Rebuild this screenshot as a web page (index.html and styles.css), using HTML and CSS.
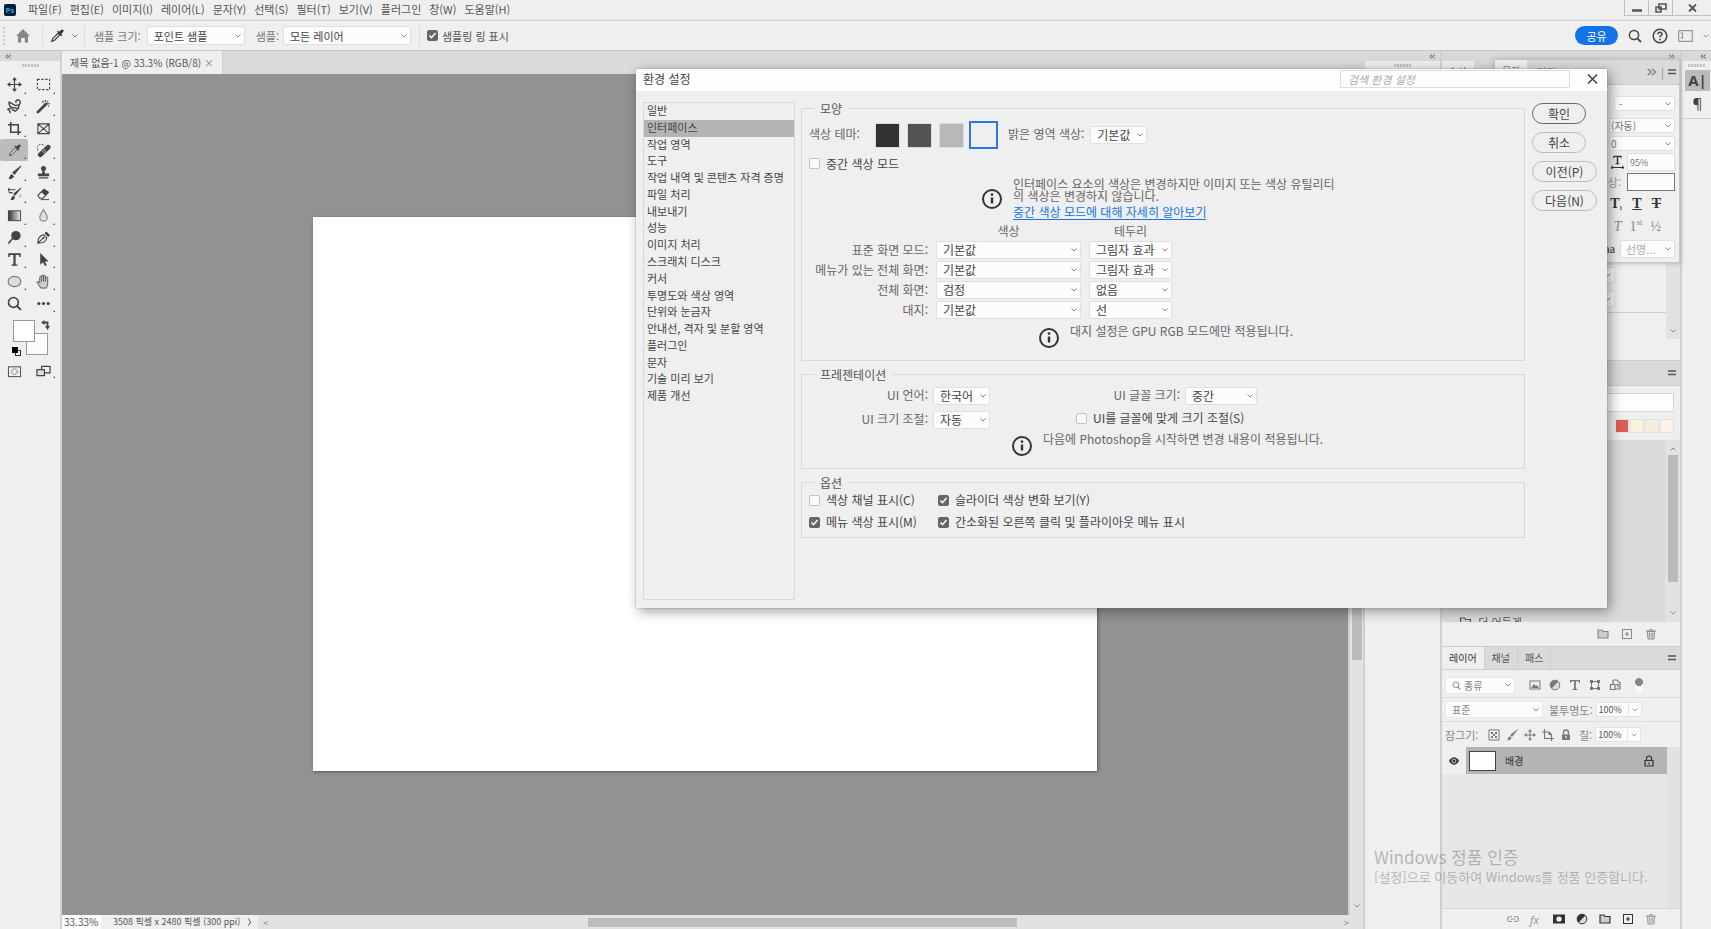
FILE: index.html
```html
<!DOCTYPE html>
<html lang="ko">
<head>
<meta charset="utf-8">
<title>Photoshop - 환경 설정</title>
<link rel="stylesheet" href="styles.css">
</head>
<body>
<svg class="defs" aria-hidden="true">
  <symbol id="info" viewBox="0 0 20 20"><circle cx="10" cy="10" r="9" fill="none" stroke="currentColor" stroke-width="2"/><path d="M10 8.5v6" stroke="currentColor" stroke-width="2.4"/><circle cx="10" cy="5.6" r="1.3" fill="currentColor"/></symbol>
  <symbol id="dropper" viewBox="0 0 18 18"><path d="M3 15l1-3 6-6 2 2-6 6z" fill="#ddd" stroke="currentColor" stroke-width="1.2"/><path d="M9 4l1.200-1 1.300 1.300L14 2c1.500-.8 3 .7 2.200 2.200l-2.400 2.400L15 8l-1.200 1.200z" fill="currentColor"/></symbol>
  <symbol id="menu" viewBox="0 0 8 8"><path d="M0 2h8M0 5.500h8" stroke="currentColor" stroke-width="1.500"/></symbol>
  <symbol id="move" viewBox="0 0 16 16"><path d="M8 2v12M2 8h12" stroke="currentColor" stroke-width="1.300"/><path d="M8 0l2.600 3.500H5.400zM8 16l2.600-3.500H5.400zM0 8l3.500-2.600v5.200zM16 8l-3.500-2.600v5.200z" fill="currentColor"/></symbol>
  <symbol id="brush" viewBox="0 0 16 16"><path d="M15 1L8 10 6 8z" fill="currentColor" stroke="currentColor"/><path d="M1 15c2 0 1-4 4-5.500L7.500 12C6 15 4 15 1 15z" fill="currentColor"/></symbol>
  <symbol id="folder" viewBox="0 0 12 12"><path d="M1 10V2h4l1 1.500h5V10z" fill="#ccc" stroke="currentColor" stroke-width="1.200"/></symbol>
  <symbol id="plus" viewBox="0 0 12 12"><rect x="1.500" y="1.500" width="9" height="9" fill="none" stroke="currentColor"/><path d="M6 4v4M4 6h4" stroke="currentColor" stroke-width="1.200"/></symbol>
  <symbol id="trash" viewBox="0 0 12 12"><path d="M2.500 3.500h7L9 11H3z" fill="#ddd" stroke="currentColor"/><path d="M1 3h10M4.500 1.500h3M4.800 5v4.500M7.200 5v4.500" stroke="currentColor" fill="none"/></symbol>
  <symbol id="lock" viewBox="0 0 12 12"><path d="M2 5.500h8V11H2z" fill="currentColor"/><path d="M3.500 5.500V3.500a2.500 2.500 0 015 0v2" fill="none" stroke="currentColor" stroke-width="1.300"/><circle cx="6" cy="8" r=".9" fill="#eee"/></symbol>
  <symbol id="glass" viewBox="0 0 14 14"><circle cx="6" cy="6" r="4.600" fill="none" stroke="currentColor" stroke-width="1.500"/><path d="M9.300 9.300L13 13" stroke="currentColor" stroke-width="1.800"/></symbol>
  <symbol id="half" viewBox="0 0 12 12"><circle cx="6" cy="6" r="4.800" fill="#ddd" stroke="currentColor"/><path d="M2.600 9.400A4.800 4.800 0 019.400 2.600z" fill="currentColor"/></symbol>
  <symbol id="tee" viewBox="0 0 12 12"><path d="M1 1h10v3h-1L9.500 2.300H6.900v7.500l1.600.4v.8h-5v-.8l1.600-.4V2.300H2.500L2 4H1z" fill="currentColor"/></symbol>
  <symbol id="collapse" viewBox="0 0 8 6"><path d="M4 .5L1.200 3 4 5.500M7.500.5L4.700 3l2.800 2.500" fill="none" stroke="currentColor" stroke-width="1.200"/></symbol>
  <symbol id="expand" viewBox="0 0 8 6"><path d="M.5.500L3.300 3 .5 5.500M4 .5L6.800 3 4 5.500" fill="none" stroke="currentColor" stroke-width="1.200"/></symbol>
</svg>

<header class="menubar">
  <svg class="logo" viewBox="0 0 12 12" aria-label="Ps"><rect width="12" height="12" rx="2" fill="#001e36"/><text x="6" y="8.500" text-anchor="middle" class="logo-text">Ps</text></svg>
  <nav>
    <a href="#">파일(F)</a><a href="#">편집(E)</a><a href="#">이미지(I)</a><a href="#">레이어(L)</a><a href="#">문자(Y)</a><a href="#">선택(S)</a><a href="#">필터(T)</a><a href="#">보기(V)</a><a href="#">플러그인</a><a href="#">창(W)</a><a href="#">도움말(H)</a>
  </nav>
  <div class="window-buttons">
    <button aria-label="최소화"><svg width="10" height="10" viewBox="0 0 10 10"><path d="M0 7.500h10" stroke="currentColor" stroke-width="2.500"/></svg></button>
    <button aria-label="복원"><svg width="12" height="10" viewBox="0 0 12 10"><path d="M4 1h7v5H4zM1 4h5v5H1z" fill="none" stroke="currentColor" stroke-width="1.600"/></svg></button>
    <button class="wide" aria-label="닫기"><svg width="9" height="8" viewBox="0 0 9 8"><path d="M1 .5l7 7M8 .5l-7 7" stroke="currentColor" stroke-width="1.900"/></svg></button>
  </div>
</header>

<section class="options">
  <span class="dots"></span>
  <svg class="home" viewBox="0 0 14 14"><path d="M7 0l7 7h-2v6.500H8.800V9H5.200v4.500H2V7H0z" fill="#868686"/></svg>
  <div class="dropper-box"><svg width="16" height="16"><use href="#dropper"/></svg><svg width="6" height="4" viewBox="0 0 6 4"><path d="M.5.500L3 3 5.500.500" fill="none" stroke="#777"/></svg></div>
  <label for="sample-size">샘플 크기:</label>
  <select id="sample-size" class="size-select"><option>포인트 샘플</option></select>
  <label for="sample">샘플:</label>
  <select id="sample" class="layer-select"><option>모든 레이어</option></select>
  <label class="ring"><input type="checkbox" checked>샘플링 링 표시</label>
  <div class="right-tools">
    <button class="share">공유</button>
    <svg width="14" height="14"><use href="#glass"/></svg>
    <svg width="16" height="16" viewBox="0 0 16 16"><circle cx="8" cy="8" r="6.800" fill="none" stroke="currentColor" stroke-width="1.500"/><path d="M5.900 6.300c.2-2.800 4.200-2.600 4.200-.2C10.100 7.600 8 7.500 8 9.300" fill="none" stroke="currentColor" stroke-width="1.500"/><circle cx="8" cy="11.500" r=".9" fill="currentColor"/></svg>
    <svg class="dim" width="15" height="12" viewBox="0 0 15 12"><path d="M.7.700h13.600v10.600H.7zM2.500 3h2v5h-2" fill="none" stroke="currentColor" stroke-width="1.200"/></svg>
    <svg class="dim" width="6" height="4" viewBox="0 0 6 4"><path d="M.5.500L3 3 5.500.500" fill="none" stroke="currentColor"/></svg>
  </div>
</section>

<main class="workspace">
  <aside class="toolbar">
    <div class="dock-head start"><svg width="6" height="5"><use href="#collapse"/></svg></div>
    <div class="grip"><i></i></div>
    <div class="tools">
      <button class="more" aria-label="이동"><svg><use href="#move"/></svg></button>
      <button class="more" aria-label="선택 윤곽"><svg viewBox="0 0 16 16"><rect x="1.500" y="2.500" width="13" height="11" fill="none" stroke="currentColor" stroke-width="1.200" stroke-dasharray="2.500 1.700"/></svg></button>
      <button class="more" aria-label="올가미"><svg viewBox="0 0 16 16"><path d="M2 3l7 4 4-1c2-2 1-5-1-5-3 0-3 2-2 3M2 3c0 3 1 5 3 6l-4 2c2 1 3 2 2 4M5 9l7 1-3 3-4-2M13 6l-1 4" fill="none" stroke="currentColor" stroke-width="1.500"/></svg></button>
      <button class="more" aria-label="마술봉"><svg viewBox="0 0 16 16"><path d="M2 14l9-9" stroke="currentColor" stroke-width="3" stroke-linecap="round"/><path d="M10 1v2M7 2l1 2M13 2l-1 1M15 5h-2M14 8l-1-1" stroke="currentColor" stroke-width="1.200"/></svg></button>
      <button class="more" aria-label="자르기"><svg viewBox="0 0 16 16"><path d="M4 1v11h11M1 4h11v11" fill="none" stroke="currentColor" stroke-width="1.700"/></svg></button>
      <button aria-label="프레임"><svg viewBox="0 0 16 16"><path d="M2 3h12v10.500H2zM2 3l12 10.500M14 3L2 13.500" fill="none" stroke="currentColor" stroke-width="1.200"/></svg></button>
      <button class="more selected" aria-label="스포이드"><svg><use href="#dropper"/></svg></button>
      <button class="more" aria-label="복구 브러시"><svg viewBox="0 0 16 16"><path d="M4.500 12.500L13 4.500" stroke="currentColor" stroke-width="5" stroke-linecap="round"/><path d="M2 8C-1 1 7 0 9 3" fill="none" stroke="currentColor" stroke-dasharray="2 1.200"/><path d="M6 8l4 3M8 6l3 4" stroke="#ddd" stroke-width=".8"/></svg></button>
      <button class="more" aria-label="브러시"><svg><use href="#brush"/></svg></button>
      <button class="more" aria-label="도장"><svg viewBox="0 0 16 16"><circle cx="8" cy="3.700" r="2.700" fill="currentColor"/><path d="M7 5h2l.5 4H14v3H2V9h4.500zM3 13h10v1.500H3z" fill="currentColor"/></svg></button>
      <button class="more" aria-label="작업 내역 브러시"><svg viewBox="0 0 16 16"><path d="M15 2L8.500 10 7 8.500z" fill="currentColor" stroke="currentColor"/><path d="M3 15c2 0 1-4 4-5l1.500 2C8 15 6 15 3 15z" fill="currentColor"/><path d="M1 4h8M2 7h4M2 2v4" stroke="currentColor" stroke-width="1.200"/><path d="M14 9v3" stroke="currentColor" stroke-dasharray="1 1"/></svg></button>
      <button class="more" aria-label="지우개"><svg viewBox="0 0 16 16"><path d="M2 10l6-6 5 3-5.500 6H4z" fill="#eee" stroke="currentColor" stroke-width="1.200"/><path d="M5.500 6.500L9 3l5 3.500-4 4z" fill="currentColor"/><path d="M5 14.500h9" stroke="currentColor"/></svg></button>
      <button class="more" aria-label="그레이디언트"><svg viewBox="0 0 16 16"><defs><linearGradient id="g"><stop stop-color="#333"/><stop offset="1" stop-color="#eee"/></linearGradient></defs><rect x="1.500" y="3" width="13" height="10.500" fill="url(#g)" stroke="currentColor"/></svg></button>
      <button class="more" aria-label="흐림"><svg viewBox="0 0 16 16"><path d="M8 1.500c2 4 4 5.500 4 8.500a4 4 0 01-8 0c0-3 2-4.500 4-8.500z" fill="#ddd" stroke="#888" stroke-width="1.200"/></svg></button>
      <button class="more" aria-label="닷지"><svg viewBox="0 0 16 16"><circle cx="9.500" cy="6" r="5" fill="currentColor"/><path d="M6 9l-4.500 5.500" stroke="currentColor" stroke-width="1.700"/></svg></button>
      <button class="more" aria-label="펜"><svg viewBox="0 0 16 16"><path d="M2 14c0-5 1-8 6-9l3.500 3.500C11 12 7 14 2 14zM2 14l5.500-5" fill="#eee" stroke="currentColor" stroke-width="1.200"/><circle cx="8" cy="8.500" r="1.200" fill="currentColor"/><path d="M9 3.500l2-2 4 4-2 2z" fill="currentColor"/></svg></button>
      <button class="more" aria-label="문자"><svg viewBox="0 0 12 12"><use href="#tee" width="12" height="12"/></svg></button>
      <button class="more" aria-label="경로 선택"><svg viewBox="0 0 16 16"><path d="M4.500 1v12.500l3-2.700 2 4.200 2-1-2-4h4z" fill="currentColor"/></svg></button>
      <button class="more" aria-label="타원"><svg viewBox="0 0 16 16"><ellipse cx="8" cy="8" rx="6.800" ry="5.500" fill="#ddd" stroke="#777" stroke-width="1.200"/></svg></button>
      <button class="more" aria-label="손"><svg viewBox="0 0 16 16"><path d="M5 15L1 8.500c1-1.200 2-.5 3 1V3.500c0-1.300 2-1.300 2 0V2c0-1.300 2-1.300 2 0v.5c0-1.300 2-1.300 2 0V4c0-1.300 2.500-1.300 2.500 0v6c0 3-1 4-1.500 5z" fill="#ccc" stroke="#555"/><path d="M6 3.500V8M8 2v6M10 3v5" stroke="#555"/></svg></button>
      <button aria-label="돋보기"><svg viewBox="0 0 14 14"><use href="#glass" width="14" height="14"/></svg></button>
      <button class="more" aria-label="도구 모음 편집"><svg viewBox="0 0 16 16"><circle cx="3" cy="8" r="1.700" fill="currentColor"/><circle cx="8" cy="8" r="1.700" fill="currentColor"/><circle cx="13" cy="8" r="1.700" fill="currentColor"/></svg></button>
    </div>
    <div class="colors"><i class="bg-color"></i><i class="fg-color"></i>
      <svg class="swap" viewBox="0 0 10 10"><path d="M3 2.500h3.500v4" fill="none" stroke="currentColor" stroke-width="1.800"/><path d="M0 2.500L3.500 0v5zM6.500 10L4 6h5z" fill="currentColor"/></svg>
      <svg class="default" viewBox="0 0 9 9"><rect x="3.500" y="3.500" width="5" height="5" fill="#fff" stroke="#333"/><rect width="6" height="6" fill="#000"/></svg>
    </div>
    <div class="modes">
      <button aria-label="빠른 마스크"><svg viewBox="0 0 16 16"><rect x="1.500" y="3" width="13" height="10.500" fill="none" stroke="currentColor"/><circle cx="8" cy="8.200" r="3" fill="#eee" stroke="currentColor" stroke-dasharray="1.500 1"/></svg></button>
      <button class="more" aria-label="화면 모드"><svg viewBox="0 0 16 16"><path d="M6 2.500h9v7H6z" fill="none" stroke="currentColor" stroke-width="1.300"/><path d="M1 6h8v6.500H1z" fill="#ddd" stroke="currentColor" stroke-width="1.300"/></svg></button>
    </div>
  </aside>

  <section class="document">
    <div class="tab-strip"><div class="doc-tab">제목 없음-1 @ 33.3% (RGB/8)<button aria-label="닫기">×</button></div></div>
    <div class="canvas-row">
      <div class="canvas"><div class="paper"></div></div>
      <div class="vscroll"><i></i><svg width="6" height="4" viewBox="0 0 6 4"><path d="M.5.500L3 3 5.500.500" fill="none" stroke="currentColor"/></svg></div>
    </div>
    <div class="status"><span class="zoom">33.33%</span><span class="size">3508 픽셀 x 2480 픽셀 (300 ppi)</span><span class="angle"><svg width="4" height="8" viewBox="0 0 4 8"><path d="M.5.500l2 3.500-2 3.500" fill="none" stroke="currentColor"/></svg></span><div class="hscroll"><span>&lt;</span><i></i><span>&gt;</span></div></div>
  </section>

  <aside class="narrow-dock">
    <div class="dock-head end"><svg width="6" height="5"><use href="#collapse"/></svg></div>
    <div class="grip"><i></i></div>
  </aside>

  <aside class="panels">
    <div class="dock-head end"><svg width="6" height="5"><use href="#expand"/></svg></div>
    <div class="properties">
      <div class="prop-tabs"><span>속성</span></div>
      <div class="prop-content">
        <div class="prop-main"><select aria-label="모드"><option></option></select><select aria-label="칠"><option></option></select></div>
        <div class="side-scroll"><svg width="6" height="4" viewBox="0 0 6 4"><path d="M.5.500L3 3 5.500.500" fill="none" stroke="currentColor"/></svg></div>
      </div>
    </div>
    <div class="panel-tabs plain"><svg class="menu-icon"><use href="#menu"/></svg></div>
    <div class="swatches">
      <input type="text" aria-label="색상 견본 검색">
      <div class="chips"><i class="red"></i><i class="cream"></i><i class="sand"></i><i class="peach"></i></div>
    </div>
    <div class="tree"><div class="tree-main"><div class="tree-row"><span>›</span><svg width="13" height="12"><use href="#folder"/></svg><span>더 어둡게</span></div></div>
      <div class="tree-scroll"><svg width="6" height="4" viewBox="0 0 6 4"><path d="M.5 3.500L3 1l2.500 2.500" fill="none" stroke="currentColor"/></svg><i></i><svg width="6" height="4" viewBox="0 0 6 4"><path d="M.5.500L3 3 5.500.500" fill="none" stroke="currentColor"/></svg></div>
    </div>
    <div class="panel-foot dimmed"><svg><use href="#folder"/></svg><svg><use href="#plus"/></svg><svg><use href="#trash"/></svg></div>
    <div class="panel-tabs"><button class="active">레이어</button><button>채널</button><button>패스</button><svg class="menu-icon"><use href="#menu"/></svg></div>
    <div class="layer-row filter-row">
      <div class="kind"><svg width="9" height="9"><use href="#glass"/></svg><select aria-label="종류"><option>종류</option></select></div>
      <div class="filters">
        <svg viewBox="0 0 12 12"><rect x="1" y="2" width="10" height="8" fill="none" stroke="currentColor"/><path d="M2 9l3-4 2 2 1-1 2 3z" fill="currentColor"/></svg>
        <svg><use href="#half"/></svg><svg><use href="#tee"/></svg>
        <svg viewBox="0 0 12 12"><path d="M2.500 2.500h7v7h-7z" fill="none" stroke="currentColor"/><path d="M1 1h3v3H1zM8 1h3v3H8zM1 8h3v3H1zM8 8h3v3H8z" fill="currentColor"/></svg>
        <svg viewBox="0 0 12 12"><path d="M4 1h4l3 3v6H6M4 1v4M1.500 5.500h4.500v5H1.500zM7 5.500h2v3" fill="none" stroke="currentColor" stroke-width="1.200"/></svg>
      </div><i class="toggle"></i>
    </div>
    <div class="layer-row blend-row">
      <select class="blend" aria-label="혼합 모드"><option>표준</option></select>
      <label for="opacity">불투명도:</label><span class="combo"><input id="opacity" value="100%"><button aria-label="불투명도 열기"></button></span>
    </div>
    <div class="layer-row lock-row"><span class="lock-label">잠그기:</span>
      <div class="locks">
        <svg viewBox="0 0 12 12"><path d="M1 1h10v10H1z" fill="none" stroke="currentColor"/><path d="M3 3h2v2H3zM7 3h2v2H7zM5 5h2v2H5zM3 7h2v2H3zM7 7h2v2H7z" fill="currentColor"/></svg>
        <svg><use href="#brush"/></svg><svg><use href="#move"/></svg>
        <svg viewBox="0 0 12 12"><path d="M0 3h7l2.500 2.500V12M2.500 0v9.500H12M7 3v2.500h2.500" fill="none" stroke="currentColor" stroke-width="1.200"/></svg>
        <svg><use href="#lock"/></svg>
      </div>
      <label for="fill">칠:</label><span class="combo"><input id="fill" value="100%"><button aria-label="칠 열기"></button></span>
    </div>
    <div class="layers">
      <div class="layer-list">
        <div class="layer"><span class="eye"><svg width="10" height="8" viewBox="0 0 10 8"><path d="M0 4c3-5 7-5 10 0-3 5-7 5-10 0z" fill="currentColor"/><circle cx="5" cy="4" r="1.900" fill="none" stroke="#eee" stroke-width=".8"/></svg></span>
          <div class="layer-name"><i class="thumb"></i><span>배경</span><svg width="12" height="12" viewBox="0 0 12 12"><path d="M2 5.500h8V11H2zM3.500 5.500V3.500a2.500 2.500 0 015 0v2M6 7.500v2" fill="none" stroke="currentColor" stroke-width="1.200"/></svg></div></div>
      </div><div class="layer-scroll"></div>
    </div>
    <div class="panel-foot">
      <svg class="faded" viewBox="0 0 12 12"><path d="M5 3.500H3a2.500 2.500 0 000 5h2M7 3.500h2a2.500 2.500 0 010 5H7M3.500 6h5" fill="none" stroke="currentColor" stroke-width="1.200"/></svg>
      <span class="fx faded">fx</span>
      <svg viewBox="0 0 12 12"><path d="M0 1.500h12v9H0z" fill="currentColor"/><circle cx="6" cy="6" r="2.600" fill="#fff"/></svg>
      <svg><use href="#half"/></svg><svg><use href="#folder"/></svg><svg><use href="#plus"/></svg><svg class="faded"><use href="#trash"/></svg>
    </div>

    <div class="character">
      <div class="char-head"><span class="char-tab">문자</span><span class="char-tab-2">단락</span><svg class="push" width="10" height="8" ><use href="#expand"/></svg><span>|</span><svg class="menu-icon"><use href="#menu"/></svg></div>
      <div class="char-body">
        <select class="style" aria-label="글꼴 스타일"><option>-</option></select>
        <select class="leading" aria-label="행간"><option>(자동)</option></select>
        <select class="tracking" aria-label="자간"><option>0</option></select>
        <div class="line"><svg width="15" height="14" viewBox="0 0 15 14"><use href="#tee" x="2" width="11" height="10"/><path d="M1 12.500h13M3 11l-2 1.500L3 14M12 11l2 1.500-2 1.500" fill="none" stroke="currentColor"/></svg><input class="scale" value="95%" aria-label="가로 비율"></div>
        <div class="line"><span class="color-label">색상:</span><button class="text-color" aria-label="텍스트 색상"></button></div>
        <div class="line type-icons"><span>T<small>₁</small></span><u>T</u><s>T</s></div>
        <div class="line type-icons light"><em>T</em><span>1<sup>st</sup></span><span>½</span></div>
        <div class="line"><label for="anti" class="aa">aa</label><select id="anti" class="anti"><option>선명...</option></select></div>
      </div>
    </div>
  </aside>

  <aside class="strip">
    <div class="dock-head end"><svg width="6" height="5"><use href="#collapse"/></svg></div>
    <div class="grip"><i></i></div>
    <button class="on">A|</button><button>¶</button>
  </aside>
</main>

<section class="dialog" role="dialog" aria-label="환경 설정">
  <header class="dialog-title"><h1>환경 설정</h1><input type="search" placeholder="검색 환경 설정" aria-label="검색 환경 설정"><button aria-label="닫기"><svg width="11" height="10" viewBox="0 0 11 10"><path d="M1 .5l9 9M10 .5l-9 9" stroke="currentColor" stroke-width="1.500"/></svg></button></header>
  <div class="dialog-body">
    <nav class="categories"><ul>
      <li>일반</li><li class="current">인터페이스</li><li>작업 영역</li><li>도구</li><li>작업 내역 및 콘텐츠 자격 증명</li><li>파일 처리</li><li>내보내기</li><li>성능</li><li>이미지 처리</li><li>스크래치 디스크</li><li>커서</li><li>투명도와 색상 영역</li><li>단위와 눈금자</li><li>안내선, 격자 및 분할 영역</li><li>플러그인</li><li>문자</li><li>기술 미리 보기</li><li>제품 개선</li>
    </ul></nav>
    <div class="settings">
      <fieldset class="look"><legend>모양</legend>
        <div class="theme-row"><span class="theme-label">색상 테마:</span>
          <div class="themes"><button class="t1" aria-label="가장 어둡게"></button><button class="t2" aria-label="어둡게"></button><button class="t3" aria-label="밝게"></button><button class="t4" aria-label="가장 밝게"></button></div>
          <label for="highlight">밝은 영역 색상:</label><select id="highlight"><option>기본값</option></select></div>
        <label class="check neutral"><input type="checkbox">중간 색상 모드</label>
        <div class="note note-1"><svg><use href="#info"/></svg><div>인터페이스 요소의 색상은 변경하지만 이미지 또는 색상 유틸리티<br>의 색상은 변경하지 않습니다.<a href="#">중간 색상 모드에 대해 자세히 알아보기</a></div></div>
        <div class="screen-grid">
          <span></span><span class="head">색상</span><span class="head">테두리</span>
          <label for="s1">표준 화면 모드:</label><select id="s1"><option>기본값</option></select><select aria-label="표준 테두리"><option>그림자 효과</option></select>
          <label for="s2">메뉴가 있는 전체 화면:</label><select id="s2"><option>기본값</option></select><select aria-label="메뉴 테두리"><option>그림자 효과</option></select>
          <label for="s3">전체 화면:</label><select id="s3"><option>검정</option></select><select aria-label="전체 테두리"><option>없음</option></select>
          <label for="s4">대지:</label><select id="s4"><option>기본값</option></select><select aria-label="대지 테두리"><option>선</option></select>
        </div>
        <div class="note note-2"><svg><use href="#info"/></svg><div>대지 설정은 GPU RGB 모드에만 적용됩니다.</div></div>
      </fieldset>
      <fieldset class="presentation"><legend>프레젠테이션</legend>
        <div class="ui-grid">
          <label for="lang">UI 언어:</label><select id="lang"><option>한국어</option></select>
          <label for="font">UI 글꼴 크기:</label><select id="font"><option>중간</option></select>
          <label for="scale">UI 크기 조절:</label><select id="scale"><option>자동</option></select>
          <label class="check fit"><input type="checkbox">UI를 글꼴에 맞게 크기 조절(S)</label>
        </div>
        <div class="note note-3"><svg><use href="#info"/></svg><div>다음에 Photoshop을 시작하면 변경 내용이 적용됩니다.</div></div>
      </fieldset>
      <fieldset class="choices"><legend>옵션</legend>
        <div class="choice-grid">
          <label class="check"><input type="checkbox">색상 채널 표시(C)</label><label class="check"><input type="checkbox" checked>슬라이더 색상 변화 보기(Y)</label>
          <label class="check"><input type="checkbox" checked>메뉴 색상 표시(M)</label><label class="check"><input type="checkbox" checked>간소화된 오른쪽 클릭 및 플라이아웃 메뉴 표시</label>
        </div>
      </fieldset>
    </div>
    <div class="actions"><button class="primary">확인</button><button>취소</button><button class="long">이전(P)</button><button class="long">다음(N)</button></div>
  </div>
</section>

<div class="watermark"><p class="big">Windows 정품 인증</p><p>[설정]으로 이동하여 Windows를 정품 인증합니다.</p></div>
</body>
</html>
```
FILE: styles.css
```css
* { box-sizing: border-box; }
body {
  margin: 0;
  height: 100vh;
  display: flex;
  flex-direction: column;
  overflow: hidden;
  position: relative;
  background: #efefef;
  color: #555;
  font: 11px/14px "Noto Sans CJK KR", sans-serif;
}
button, input, select { font: inherit; color: inherit; margin: 0; padding: 0; border: 0; background: none; border-radius: 0; }
a { color: inherit; text-decoration: none; }
i { display: block; font-style: normal; }
svg { flex: none; display: block; }
.defs { position: absolute; width: 0; height: 0; }
select {
  appearance: none;
  height: 18px;
  padding: 0 16px 0 6px;
  line-height: 16px;
  color: #444;
  border: 1px solid #e0e0e0;
  border-radius: 2px;
  background: #fcfcfc url("data:image/svg+xml,%3Csvg xmlns='http://www.w3.org/2000/svg' width='6' height='4'%3E%3Cpath d='M.5.5L3 3 5.500.5' fill='none' stroke='%23888'/%3E%3C/svg%3E") no-repeat right 3px center;
}
input[type="checkbox"] { appearance: none; flex: none; width: 11px; height: 11px; border: 1px solid #c4c4c4; border-radius: 2px; background: #fafafa; }
input[type="checkbox"]:checked {
  border-color: #666;
  background: #666 url("data:image/svg+xml,%3Csvg xmlns='http://www.w3.org/2000/svg' width='9' height='9'%3E%3Cpath d='M1.500 4.500l2 2.200 4-4.700' fill='none' stroke='white' stroke-width='1.500'/%3E%3C/svg%3E") no-repeat center;
}

/* Menu and options bars */
.menubar { flex: none; display: flex; align-items: flex-start; height: 21px; border-bottom: 1px solid #cfcfcf; }
.logo { width: 12px; height: 12px; margin: 4px 12px 0 4px; }
.logo-text { font: bold 7px "Liberation Sans", sans-serif; fill: #31a8ff; }
.menubar nav { display: flex; gap: 8px; padding-top: 2px; }
.window-buttons { display: flex; margin-left: auto; color: #555; border: 1px solid #c0c0c0; border-top: 0; border-right: 0; }
.window-buttons button { width: 24px; height: 15px; display: grid; place-items: center; border-right: 1px solid #c0c0c0; }
.window-buttons .wide { width: 38px; border-right: 0; }
.options { flex: none; display: flex; align-items: center; height: 29px; padding: 0 2px 0 3px; color: #777; }
.dots { width: 2px; height: 18px; border-left: 2px dotted #ccc; }
.home { width: 14px; height: 14px; margin: 0 12px 0 11px; }
.dropper-box { display: flex; align-items: center; gap: 7px; height: 22px; padding: 0 6px; margin-right: 9px; border: 1px solid #dedede; border-width: 0 1px; color: #333; }
.options select { height: 19px; margin: 0 11px 0 6px; }
.options .size-select { width: 98px; }
.options .layer-select { width: 128px; margin-left: 4px; margin-right: 8px; }
.ring { display: flex; align-items: center; gap: 4px; padding-left: 7px; height: 22px; border-left: 1px solid #dedede; color: #555; }
.right-tools { display: flex; align-items: center; gap: 10px; margin-left: auto; color: #444; }
.right-tools .share { width: 43px; height: 19px; border-radius: 10px; background: #1473e6; color: #fff; }
.dim { color: #999; }

/* Docks */
.workspace { flex: 1; min-height: 0; display: flex; }
.dock-head { flex: none; height: 11px; display: flex; align-items: center; padding: 0 5px; background: #d9d9d9; border-top: 1px solid #c8c8c8; color: #444; }
.dock-head.end { justify-content: flex-end; }
.grip { flex: none; height: 13px; padding-top: 3px; }
.grip i { width: 17px; height: 3px; margin: 0 auto; background: repeating-linear-gradient(90deg, #c4c4c4 0 2px, #e4e4e4 2px 3px); }
.toolbar { flex: none; width: 62px; border-right: 2px solid #d2d2d2; color: #444; }
.tools { display: grid; grid-template: repeat(11, 1fr) / 28px 28px; column-gap: 1px; height: 240px; }
.tools button, .modes button { position: relative; display: grid; place-items: center; }
.tools svg, .modes svg { width: 15px; height: 15px; }
.tools .selected { background: #bbb; border-radius: 2px; }
.more::after { content: ""; position: absolute; right: 2px; bottom: 2px; border: 1px solid #555; border-top-color: transparent; border-left-color: transparent; }
.colors { position: relative; height: 48px; }
.fg-color, .bg-color { position: absolute; width: 22px; height: 22px; background: #fff; border: 1px solid #999; }
.fg-color { left: 13px; top: 6px; }
.bg-color { left: 26px; top: 19px; background: #fafcfb; }
.swap { position: absolute; left: 41px; top: 6px; width: 10px; height: 10px; }
.default { position: absolute; left: 12px; top: 33px; width: 9px; height: 9px; }
.modes { display: grid; grid-template-columns: 28px 28px; column-gap: 1px; height: 18px; }
.document { flex: 1; min-width: 0; display: flex; flex-direction: column; }
.tab-strip { flex: none; height: 24px; display: flex; background: #dadada; border-top: 1px solid #c8c8c8; }
.doc-tab { display: flex; align-items: center; padding: 0 8px; background: #efefef; font-size: 10px; border-right: 1px solid #cfcfcf; width: 161px; justify-content: space-between; white-space: nowrap; }
.doc-tab button { color: #888; }
.canvas-row { flex: 1; min-height: 0; display: flex; }
.canvas { flex: 1; background: #929292; padding: 143px 0 0 251px; overflow: hidden; }
.paper { width: 784px; height: 554px; background: #fff; box-shadow: 1px 1px 3px #555; }
.vscroll { width: 17px; display: flex; flex-direction: column; align-items: center; justify-content: space-between; padding-bottom: 7px; background: #e2e2e2; border: 1px solid #d0d0d0; border-width: 0 2px; color: #888; }
.vscroll i { width: 10px; height: 586px; background: #bcbcbc; }
.status { flex: none; display: flex; height: 14px; font-size: 9px; line-height: 13px; border-right: 2px solid #d0d0d0; }
.status .zoom { width: 39px; padding-left: 2px; background: #fcfcfc; font-size: 10px; }
.status .size { width: 147px; padding-left: 12px; white-space: nowrap; }
.status .angle { display: flex; align-items: center; width: 10px; }
.hscroll { flex: 1; display: flex; align-items: center; padding: 0 14px 0 5px; background: #e2e2e2; color: #888; }
.hscroll i { width: 429px; height: 9px; margin: 0 auto 0 320px; background: #bdbdbd; }
.narrow-dock { flex: none; width: 75px; }
.panels { position: relative; flex: none; width: 242px; display: flex; flex-direction: column; border: 2px solid #d0d0d0; border-width: 0 2px; }
.properties { flex: none; height: 299px; display: flex; flex-direction: column; }
.prop-tabs { height: 24px; background: #dadada; }
.prop-tabs span { display: block; width: 32px; height: 24px; padding: 4px 6px; font-size: 10px; background: #efefef; }
.prop-content { flex: 1; display: flex; padding-bottom: 21px; }
.prop-main { flex: 1; height: 228px; padding: 182px 51px 0 40px; border-bottom: 1px solid #d0d0d0; }
.prop-main select { display: block; width: 100%; height: 16px; margin-bottom: 8px; }
.side-scroll { width: 14px; background: #e2e2e2; display: flex; align-items: flex-end; justify-content: center; padding-bottom: 6px; color: #888; }
.panel-tabs { flex: none; height: 24px; display: flex; align-items: stretch; background: #dadada; border: 1px solid #ccc; border-width: 1px 0; font-size: 10px; padding-right: 4px; }
.panel-tabs.plain { height: 26px; }
.panel-tabs button { padding: 0 7px; border-right: 1px solid #cfcfcf; }
.panel-tabs .active { background: #efefef; color: #333; }
.menu-icon { width: 8px; height: 8px; margin-left: auto; align-self: center; color: #555; }
.swatches { flex: none; height: 54px; padding: 7px 6px 0; }
.swatches input { display: block; width: 100%; height: 19px; background: #fdfdfd; border: 1px solid #d4d4d4; }
.chips { display: flex; justify-content: flex-end; gap: 1px; margin-top: 7px; }
.chips i { width: 14px; height: 14px; border: 1px solid #e0e0e0; }
.chips .red { background: #d95f54; }
.chips .cream { background: #faf3d8; }
.chips .sand { background: #f6ecdf; }
.chips .peach { background: #fdf2e8; }
.tree { flex: none; height: 182px; display: flex; background: #dadada; }
.tree-main { flex: 1; display: flex; align-items: flex-end; overflow: hidden; }
.tree-row { display: flex; align-items: flex-start; gap: 6px; height: 6px; margin-left: 8px; overflow: hidden; line-height: 12px; }
.tree-scroll { width: 15px; display: flex; flex-direction: column; align-items: center; padding: 7px 0; background: #e2e2e2; color: #888; }
.tree-scroll i { width: 10px; height: 127px; margin: 4px 0 auto; background: #bababa; }
.panel-foot { flex: none; display: flex; align-items: center; justify-content: flex-end; gap: 11px; height: 21px; padding-right: 23px; color: #333; }
.panel-foot svg { width: 12px; height: 12px; }
.panel-foot.dimmed { gap: 12px; height: 24px; color: #888; }
.faded { color: #999; }
.fx { font: italic 11px "Noto Sans", sans-serif; width: 12px; }
.layer-row { flex: none; display: flex; align-items: center; height: 24px; padding: 0 4px 0 3px; border-bottom: 1px solid #ddd; color: #888; }
.layer-row select { height: 17px; color: #888; border-color: #e8e8e8; font-size: 10px; }
.layer-row.filter-row { height: 28px; padding-top: 3px; }
.kind { position: relative; width: 70px; }
.kind svg { position: absolute; left: 7px; top: 4px; }
.kind select { width: 100%; padding-left: 18px; }
.filters, .locks { display: flex; gap: 8px; }
.filters { margin-left: 14px; }
.filters svg, .locks svg { width: 12px; height: 12px; color: #777; }
.toggle { width: 8px; height: 15px; margin-left: 14px; border-radius: 4px; background: radial-gradient(circle at 4px 4px, #888 0 4px, #f8f8f8 4px); }
.blend { width: 98px; margin-right: 6px; }
.combo { display: flex; width: 46px; height: 15px; margin-left: 3px; background: #fcfcfc; border: 1px solid #e3e3e3; }
.combo input { width: 32px; padding-left: 2px; font-size: 9px; color: #555; border-right: 1px solid #e3e3e3; }
.combo button { flex: 1; background: url("data:image/svg+xml,%3Csvg xmlns='http://www.w3.org/2000/svg' width='6' height='4'%3E%3Cpath d='M.5.5L3 3 5.500.5' fill='none' stroke='%23aaa'/%3E%3C/svg%3E") no-repeat center; }
.lock-label { width: 43px; }
.locks { gap: 6px; width: 91px; }
.layer-row.lock-row { height: 25px; border: 0; }
.layers { flex: 1; min-height: 0; display: flex; background: #e7e7e7; }
.layer-list { flex: 1; }
.layer-scroll { width: 13px; background: #e2e2e2; }
.layer { display: flex; height: 27px; color: #333; }
.eye { width: 24px; background: #efefef; display: grid; place-items: center; }
.layer-name { flex: 1; display: flex; align-items: center; padding: 0 12px 0 3px; background: #b4b4b4; font-size: 10px; }
.layer-name svg { margin-left: auto; }
.thumb { width: 27px; height: 20px; margin-right: 9px; background: #fff; border: 1px solid #444; }
.layers + .panel-foot { border-top: 1px solid #d4d4d4; }

/* Floating character panel */
.character { position: absolute; top: 9px; right: 0; width: 186px; height: 204px; background: #efefef; border: 1px solid #c8c8c8; box-shadow: 0 0 5px #aaa; }
.char-head { display: flex; align-items: center; gap: 4px; height: 25px; padding-right: 3px; background: #dadada; border-bottom: 1px solid #ccc; color: #888; }
.char-head .menu-icon { margin-left: 0; }
.char-head .push { margin-left: auto; }
.char-tab { height: 24px; padding: 4px 7px; font-size: 10px; background: #efefef; }
.char-tab-2 { padding: 0 6px; font-size: 10px; }
.char-body { display: flex; flex-direction: column; align-items: flex-end; padding: 11px 4px 0 0; }
.char-body select { height: 15px; line-height: 13px; font-size: 10px; padding-left: 4px; color: #777; }
.char-body .style { width: 61px; margin-bottom: 7px; }
.char-body .leading { width: 66px; margin-bottom: 3px; padding-left: 1px; }
.char-body .tracking { width: 66px; margin-bottom: 2px; padding-left: 1px; }
.line { display: flex; align-items: center; justify-content: flex-end; gap: 2px; min-height: 18px; margin-bottom: 2px; color: #333; }
.scale, .text-color { width: 48px; height: 18px; background: #fcfcfc; border: 1px solid #ddd; }
.scale { font-size: 9px; padding-left: 2px; color: #777; }
.text-color { border-color: #777; }
.color-label { color: #999; padding-right: 4px; }
.type-icons { gap: 10px; height: 22px; margin-bottom: 0; padding-right: 14px; font: bold 14px/22px "Liberation Serif", serif; }
.type-icons.light { font-weight: normal; color: #888; gap: 8px; height: 24px; margin-bottom: 1px; }
.type-icons small, .type-icons sup { font-size: 9px; line-height: 9px; }
.aa { font: 12px "Liberation Serif", serif; padding-right: 3px; }
.char-body .anti { width: 55px; height: 18px; font-size: 11px; padding-left: 5px; color: #aaa; }
.strip { flex: none; width: 29px; background: linear-gradient(#cfcfcf, #cfcfcf) 0 68px / 100% 1px no-repeat; }
.strip button { display: block; width: 25px; height: 21px; margin: 0 0 2px 3px; font: 15px/17px "Noto Sans", sans-serif; color: #444; }
.strip .grip { height: 9px; }
.strip .on { background: #bbb; font-weight: bold; }
.strip button:last-child { margin-bottom: 0; }

/* Preferences dialog */
.dialog { position: absolute; left: 636px; top: 69px; width: 971px; height: 539px; display: flex; flex-direction: column; background: #efefef; box-shadow: 0 0 1px #777, 3px 3px 12px rgba(0, 0, 0, .4); font-size: 12px; color: #666; }
.dialog-title { flex: none; display: flex; align-items: center; height: 22px; padding: 0 9px 2px 7px; background: #fdfdfd; color: #444; }
.dialog-title h1 { flex: 1; margin: 0; font-size: 12px; line-height: 14px; font-weight: normal; }
.dialog-title input { width: 230px; height: 18px; padding: 0 7px; border: 1px solid #ddd; font-size: 11px; }
.dialog-title input::placeholder { font-style: italic; color: #aaa; }
.dialog-title button { margin-left: 17px; }
.dialog-body { flex: 1; display: flex; padding: 11px 9px 8px 7px; }
.categories { flex: none; width: 152px; border: 1px solid #d8d8d8; font-size: 11px; color: #444; }
.categories ul { display: grid; grid-auto-rows: 1fr; height: 302px; margin: 0; padding: 0; list-style: none; }
.categories li { padding-left: 3px; line-height: 15px; }
.categories .current { background: #b4b4b4; }
.settings { flex: 1; display: flex; flex-direction: column; gap: 7px; margin: 0 7px 0 6px; }
fieldset { min-width: 0; margin: 0; padding: 0 7px; border: 1px solid #d8d8d8; }
legend { margin-left: 5px; padding: 0 6px; line-height: 13px; color: #555; }
.look { height: 259px; padding-top: 6px; }
.presentation { height: 101px; padding-top: 6px; }
.theme-row { display: flex; align-items: center; height: 28px; }
.theme-label { width: 66px; padding-bottom: 2px; }
.theme-row label { padding-bottom: 2px; }
.themes { display: flex; align-items: center; gap: 7px; margin-right: 10px; }
.themes button { width: 25px; height: 25px; border: 1px solid #ddd; }
.themes .t1 { background: #323232; }
.themes .t2 { background: #535353; }
.themes .t3 { background: #b8b8b8; }
.themes .t4 { width: 29px; height: 28px; margin-left: -2px; background: #f0f0f0; border: 2px solid #2678e8; }
.theme-row select { width: 57px; margin-left: 6px; }
.check { display: flex; align-items: center; gap: 6px; color: #444; }
.neutral { height: 15px; margin-top: 7px; }
.note { display: flex; gap: 11px; line-height: 12px; }
.note svg { width: 20px; height: 20px; color: #333; }
.note a { display: block; width: max-content; margin-top: 3px; line-height: 14px; color: #1473e6; border-bottom: 1px solid #1473e6; }
.note-1 { margin-top: 7px; padding-left: 173px; align-items: center; }
.note-2 { margin-top: 6px; padding-left: 230px; }
.note-3 { margin-top: 4px; padding-left: 203px; }
.note-2 svg, .note-3 svg { margin-top: 3px; }
.screen-grid { display: grid; grid-template-columns: 119px 145px 83px; gap: 2px 8px; padding-top: 3px; }
.screen-grid label, .ui-grid label:not(.check) { text-align: right; line-height: 18px; }
.ui-grid label:not(.check) { line-height: 15px; }
.head { text-align: center; line-height: 16px; }
.ui-grid { display: grid; grid-template-columns: 119px 57px 185px 72px; gap: 6px 5px; }
.fit { grid-column: 3 / 5; padding-left: 81px; height: 14px; white-space: nowrap; }
.choice-grid { display: grid; grid-template-columns: 129px 1fr; grid-auto-rows: 22px; padding-bottom: 4px; }
.actions { flex: none; width: 66px; display: flex; flex-direction: column; align-items: flex-start; gap: 8px; padding-top: 1px; }
.actions button { width: 54px; height: 21px; line-height: 18px; border: 1px solid #bbb; border-radius: 11px; color: #444; }
.actions .long { width: 65px; }
.actions .primary { border-color: #666; }

.watermark { position: absolute; left: 1374px; top: 846px; color: rgba(120, 120, 120, .5); font-size: 13px; line-height: 18px; pointer-events: none; }
.watermark p { margin: 0; }
.watermark .big { font-size: 17px; line-height: 22px; }
```
